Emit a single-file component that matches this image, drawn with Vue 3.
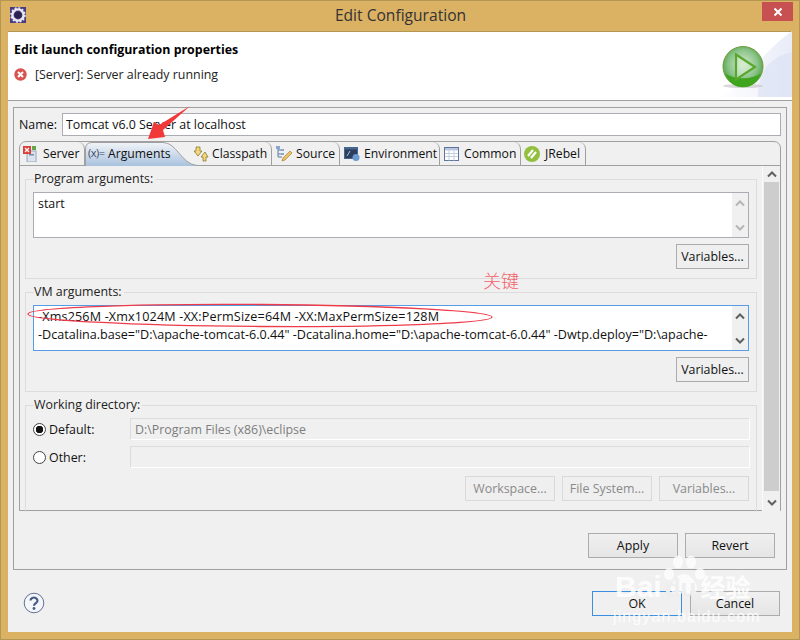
<script setup>
const tabs = [
  { name: 'Server', cls: 'tab-server', icon: 'server' },
  { name: 'Arguments', cls: 'tab-args', icon: 'args' },
  { name: 'Classpath', cls: 'tab-classpath', icon: 'classpath' },
  { name: 'Source', cls: 'tab-source', icon: 'source' },
  { name: 'Environment', cls: 'tab-env', icon: 'env' },
  { name: 'Common', cls: 'tab-common', icon: 'common' },
  { name: 'JRebel', cls: 'tab-jrebel', icon: 'jrebel' }
]
</script>

<template>
  <div class="window">
    <div class="titlebar">
      <svg class="app-icon" width="16" height="16" viewBox="0 0 16 16">
        <rect width="16" height="16" fill="#4b3b80" />
        <circle cx="8" cy="8" r="5.6" fill="none" stroke="#e8e8ee" stroke-width="2.4" />
        <circle cx="8" cy="8" r="7" fill="none" stroke="#e8e8ee" stroke-width="1.6" stroke-dasharray="2 1.67" />
        <circle cx="8" cy="8" r="3.6" fill="#2a2350" />
      </svg>
      <span class="title">Edit Configuration</span>
      <div class="close">
        <svg width="10" height="10" viewBox="0 0 10 10"><path d="M1.5 1.5l7 7M8.5 1.5l-7 7" stroke="#fff" stroke-width="2" /></svg>
      </div>
    </div>

    <div class="body">
      <div class="banner">
        <div class="banner-text">
          <h1>Edit launch configuration properties</h1>
          <div class="message">
            <svg width="13" height="13" viewBox="0 0 13 13">
              <circle cx="6.5" cy="6.5" r="6.2" fill="#d9534f" />
              <path d="M4 4l5 5M9 4l-5 5" stroke="#fff" stroke-width="2" />
            </svg>
            <span>[Server]: Server already running</span>
          </div>
        </div>
        <svg class="banner-art" width="72" height="66" viewBox="0 0 72 66">
          <defs>
            <linearGradient id="artBg" x1="0" y1="0" x2="1" y2="0">
              <stop offset="0" stop-color="#fff" />
              <stop offset="1" stop-color="#e8ecf8" />
            </linearGradient>
            <radialGradient id="ball" cx="0.5" cy="0.45" r="0.6">
              <stop offset="0" stop-color="#d6ead2" />
              <stop offset="0.6" stop-color="#8cc48a" />
              <stop offset="1" stop-color="#3f9a2e" />
            </radialGradient>
          </defs>
          <path d="M0 66C20 60 40 22 72 0V66Z" fill="url(#artBg)" />
          <path d="M38 66C38 40 50 26 72 21V66Z" fill="#dfe4f5" opacity=".8" />
          <ellipse cx="23" cy="55" rx="20" ry="2" fill="#c8c8c8" opacity=".7" />
          <circle cx="23" cy="35.5" r="20" fill="url(#ball)" stroke="#6f9a3c" stroke-width="1" />
          <path d="M5.500 42.500a18 18 0 0 0 35 0a22 12 0 0 1-35 0Z" fill="#3fa51f" />
          <path d="M16 23.500l19 12.500l-19 12.500Z" fill="#dcefd5" fill-opacity=".5" stroke="#58a82d" stroke-width="2.2" />
        </svg>
      </div>

      <div class="form-box">
        <div class="name-row">
          <label>Name:</label>
          <div class="field">Tomcat v6.0 Server at localhost</div>
        </div>

        <div class="folder">
          <div class="tabstrip">
            <div v-for="tab in tabs" :key="tab.name" class="tab" :class="tab.cls">
              <svg v-if="tab.icon === 'args'" class="args-bg" width="113" height="24" viewBox="0 0 113 24">
                <defs>
                  <linearGradient id="argsGrad" x1="0" y1="0" x2="0" y2="1">
                    <stop offset="0" stop-color="#f1f4f8" />
                    <stop offset="1" stop-color="#a9c2de" />
                  </linearGradient>
                </defs>
                <path d="M0 24V7Q0 .5 7 .5H78C92 .5 96 22 112 23.5V24Z" fill="url(#argsGrad)" />
                <path d="M.5 24V7Q.5 .5 7 .5H78C92 .5 96 22 112 23.5" fill="none" stroke="#a0a0a0" />
              </svg>

              <svg v-if="tab.icon === 'server'" width="14" height="16" viewBox="0 0 14 16">
                <rect x="4" y="5" width="9" height="11" fill="#dde3ee" stroke="#9aa6b8" />
                <rect x="6" y="8" width="5" height="1.5" fill="#7d8ba0" />
                <rect x="0" y="0" width="8" height="8" fill="#d8403c" />
                <path d="M2 2l4 4M6 2l-4 4" stroke="#fff" stroke-width="1.2" />
                <rect x="9" y="0" width="4" height="4" fill="#62a84a" />
              </svg>
              <span v-if="tab.icon === 'args'" class="args-icon">(x)=</span>
              <svg v-if="tab.icon === 'classpath'" width="16" height="16" viewBox="0 0 16 16">
                <path d="M3 1h4v4h2l-4 5l-4-5h2Z" fill="#f3d77a" stroke="#8a7a30" stroke-width=".8" />
                <path d="M11 15v-4H9l4-5l3 5h-2v4Z" transform="translate(-1 0)" fill="#f3d77a" stroke="#8a7a30" stroke-width=".8" />
              </svg>
              <svg v-if="tab.icon === 'source'" width="16" height="16" viewBox="0 0 16 16">
                <path d="M2 1v10M2 4h4M2 8h4M2 11h4" stroke="#5b7aa8" fill="none" />
                <rect x="0" y="0" width="4" height="3" fill="#8aa6cc" />
                <rect x="5" y="3" width="3" height="2" fill="#8aa6cc" />
                <rect x="5" y="7" width="3" height="2" fill="#8aa6cc" />
                <path d="M6 15l1-3l7-7l2 2l-7 7Z" fill="#eac26c" stroke="#b08b3c" stroke-width=".8" />
              </svg>
              <svg v-if="tab.icon === 'env'" width="16" height="16" viewBox="0 0 16 16">
                <rect x="0" y="1" width="14" height="12" fill="#46658f" />
                <rect x="1" y="3.500" width="12" height="8.500" fill="#2d3f5c" />
                <path d="M3 10l3-5" stroke="#a8c0dc" />
                <circle cx="12" cy="11.500" r="3.500" fill="#6b9ad0" />
              </svg>
              <svg v-if="tab.icon === 'common'" width="15" height="14" viewBox="0 0 15 14">
                <rect x=".5" y=".5" width="14" height="13" fill="#fff" stroke="#5f749c" />
                <rect x="1" y="1" width="13" height="2.500" fill="#b9c6de" />
                <path d="M1 6.500h13M1 9.500h13M5 3.500v10M10 3.500v10" stroke="#c3cee0" />
              </svg>
              <svg v-if="tab.icon === 'jrebel'" width="16" height="16" viewBox="0 0 16 16">
                <circle cx="8" cy="8" r="8" fill="#93bf3e" />
                <path d="M4 10l5-6M7 12l5-6" stroke="#fff" stroke-width="2.200" />
              </svg>
              <span class="tab-label">{{ tab.name }}</span>
            </div>
          </div>

          <div class="folder-body">
            <div class="pane">
              <div class="group group-fixed">
                <div class="legend">Program arguments:</div>
                <div class="textarea">
                  <div class="textarea-text">start</div>
                  <div class="mini-scroll off">
                    <svg width="10" height="7" viewBox="0 0 10 7"><path d="M1 5.500l4-4l4 4" fill="none" stroke="currentColor" stroke-width="2" /></svg>
                    <svg width="10" height="7" viewBox="0 0 10 7"><path d="M1 1.500l4 4l4-4" fill="none" stroke="currentColor" stroke-width="2" /></svg>
                  </div>
                </div>
                <div class="btn-row"><button class="btn btn-var">Variables...</button></div>
              </div>

              <div class="group group-fixed">
                <div class="legend">VM arguments:</div>
                <div class="textarea focused">
                  <div class="textarea-text nowrap"><span class="vm-first">-Xms256M -Xmx1024M -XX:PermSize=64M -XX:MaxPermSize=128M</span><br />-Dcatalina.base="D:\apache-tomcat-6.0.44" -Dcatalina.home="D:\apache-tomcat-6.0.44" -Dwtp.deploy="D:\apache-</div>
                  <div class="mini-scroll">
                    <svg width="10" height="7" viewBox="0 0 10 7"><path d="M1 5.500l4-4l4 4" fill="none" stroke="currentColor" stroke-width="2" /></svg>
                    <svg width="10" height="7" viewBox="0 0 10 7"><path d="M1 1.500l4 4l4-4" fill="none" stroke="currentColor" stroke-width="2" /></svg>
                  </div>
                </div>
                <div class="btn-row"><button class="btn btn-var">Variables...</button></div>
              </div>

              <div class="group group-open">
                <div class="legend">Working directory:</div>
                <div class="radio-row">
                  <span class="radio on"></span>
                  <label>Default:</label>
                  <div class="dir-field">D:\Program Files (x86)\eclipse</div>
                </div>
                <div class="radio-row">
                  <span class="radio"></span>
                  <label>Other:</label>
                  <div class="dir-field"></div>
                </div>
                <div class="btn-row dir-buttons">
                  <button class="btn disabled">Workspace...</button>
                  <button class="btn disabled">File System...</button>
                  <button class="btn disabled">Variables...</button>
                </div>
              </div>
            </div>

            <div class="scrollbar">
              <svg width="10" height="7" viewBox="0 0 10 7"><path d="M1 5.500l4-4l4 4" fill="none" stroke="#606060" stroke-width="2" /></svg>
              <div class="thumb"></div>
              <svg width="10" height="7" viewBox="0 0 10 7"><path d="M1 1.500l4 4l4-4" fill="none" stroke="#606060" stroke-width="2" /></svg>
            </div>
          </div>
        </div>

        <div class="apply-row">
          <button class="btn wide">Apply</button>
          <button class="btn wide">Revert</button>
        </div>
      </div>

      <div class="footer">
        <svg class="help" width="22" height="22" viewBox="0 0 22 22">
          <circle cx="11" cy="11" r="9.800" fill="#f4f6fa" stroke="#5f7198" stroke-width="1" />
          <path d="M7.500 8.500a3.500 3 0 1 1 5.500 2.500c-1.300 1-2 1.300-2 2.800" fill="none" stroke="#465a86" stroke-width="2.200" />
          <circle cx="11" cy="16.500" r="1.400" fill="#465a86" />
        </svg>
        <div class="footer-buttons">
          <button class="btn wide default">OK</button>
          <button class="btn wide">Cancel</button>
        </div>
      </div>
    </div>

    <!-- annotations drawn over the screenshot -->
    <svg class="arrow" width="46" height="36" viewBox="0 0 46 36">
      <path d="M43 1L16 25L18 32L1 34L7 17L12 20Z" fill="#f2393a" />
    </svg>
    <svg class="oval" width="470" height="28" viewBox="0 0 470 28">
      <ellipse cx="235" cy="13.500" rx="232" ry="11" transform="rotate(.4 235 13.500)" fill="none" stroke="#ee3b4a" stroke-width="1.300" />
    </svg>
    <div class="note">关键</div>

    <div class="watermark">
      <svg class="paw" width="44" height="44" viewBox="0 0 44 44">
        <ellipse cx="7" cy="19" rx="5" ry="6" />
        <ellipse cx="16" cy="7" rx="5" ry="6.500" />
        <ellipse cx="29" cy="7" rx="5" ry="6.500" />
        <ellipse cx="38" cy="19" rx="5" ry="6" />
        <path d="M22 19c6 0 9 6 12 10c3 5 0 11-6 10c-4-1-8-1-12 0c-6 1-9-5-6-10c3-4 6-10 12-10Z" />
      </svg>
      <div class="wm-brand"><span class="wm-bai">Bai</span><span class="wm-du">du</span><span class="wm-cn">经验</span></div>
      <div class="wm-url">jingyan.baidu.com</div>
    </div>
  </div>
</template>

<style scoped>
.window {
  position: relative;
  box-sizing: border-box;
  width: 800px;
  height: 640px;
  overflow: hidden;
  background: #dbb163;
  border: 1px solid #b39753;
  font-family: "Open Sans", "Noto Sans", sans-serif;
  font-size: 12.4px;
  color: #111;
}

.titlebar {
  position: relative;
  height: 30px;
  display: flex;
  align-items: center;
  justify-content: center;
}

.app-icon {
  position: absolute;
  left: 9px;
  top: 6px;
}

.title {
  font-size: 15.6px;
  color: #333;
  margin-left: 1px;
  margin-bottom: 3px;
}

.close {
  position: absolute;
  right: 6px;
  top: 1px;
  width: 31px;
  height: 19px;
  background: #c75050;
  display: flex;
  align-items: center;
  justify-content: center;
}

.body {
  margin: 0 7px;
  height: 601px;
  background: #f0f0f0;
  border-top: 1px solid #b39753;
  box-sizing: border-box;
}

.banner {
  height: 68px;
  background: #fff;
  border-bottom: 1px solid #a0a0a0;
  display: flex;
  justify-content: space-between;
  align-items: flex-start;
}

.banner-text {
  padding: 9px 0 0 6px;
}

.banner-text h1 {
  margin: 0;
  font-size: 12.4px;
  font-weight: 700;
  line-height: 17px;
  color: #000;
}

.message {
  display: flex;
  align-items: center;
  gap: 8px;
  margin-top: 8px;
  line-height: 17px;
  color: #222;
}

.banner-art {
  display: block;
  margin-top: -1px;
}

.form-box {
  margin: 6px 5px 0;
  height: 463px;
  box-sizing: border-box;
  border: 1px solid #a0a0a0;
  padding: 5px;
}

.name-row {
  display: flex;
  align-items: center;
  height: 23px;
}

.name-row label {
  width: 43px;
}

.field {
  flex: 1;
  height: 23px;
  box-sizing: border-box;
  background: #fff;
  border: 1px solid #abadb3;
  padding: 0 3px;
  line-height: 21px;
}

.folder {
  margin-top: 5px;
  height: 370px;
  box-sizing: border-box;
  border: 1px solid #a0a0a0;
  border-radius: 7px 7px 0 0;
}

.tabstrip {
  display: flex;
  height: 23px;
  border-bottom: 1px solid #a0a0a0;
  box-sizing: content-box;
  font-size: 12.2px;
}

.tab {
  position: relative;
  display: flex;
  align-items: center;
  box-sizing: border-box;
  height: 23px;
  padding-left: 3px;
  border-right: 1px solid #a0a0a0;
  border-top-right-radius: 7px;
}

.tab-label {
  position: relative;
}

.tab-server { width: 65px; gap: 6px; }
.tab-args { width: 105px; gap: 2px; border-right: 0; border-radius: 0; }
.tab-classpath { width: 82px; gap: 3px; }
.tab-source { width: 68px; gap: 4px; padding-left: 4px; }
.tab-env { width: 100px; gap: 4px; padding-left: 4px; }
.tab-common { width: 81px; gap: 5px; padding-left: 4px; }
.tab-jrebel { width: 65px; gap: 5px; padding-left: 3px; }

.args-bg {
  position: absolute;
  left: 0;
  top: 0;
}

.args-icon {
  position: relative;
  top: -1px;
  color: #3c4a66;
  font-size: 11px;
  letter-spacing: -0.5px;
  width: 18px;
}

.folder-body {
  display: flex;
  height: 345px;
}

.pane {
  flex: 1;
  padding: 13px 5px 0;
  min-width: 0;
}

.group {
  border: 1px solid #dcdcdc;
  box-sizing: border-box;
  padding: 0 7px;
}

.group-fixed {
  height: 100px;
  margin-bottom: 13px;
}

.group-open {
  height: 107px;
  border-bottom: 0;
}

.legend {
  display: table;
  margin: -9px 0 0 1px;
  padding: 0 2px 0 0;
  height: 16px;
  line-height: 15px;
  background: #f0f0f0;
  color: #222;
}

.textarea {
  display: flex;
  height: 46px;
  margin-top: 5px;
  box-sizing: border-box;
  background: #fff;
  border: 1px solid #abadb3;
}

.textarea.focused {
  border-color: #569de5;
}

.textarea-text {
  flex: 1;
  min-width: 0;
  padding: 2px 4px;
  line-height: 18px;
  color: #111;
}

.nowrap {
  white-space: nowrap;
  overflow: hidden;
  font-size: 12.6px;
}

.vm-first {
  letter-spacing: 0.16px;
}

.mini-scroll {
  width: 16px;
  background: #f0f0f0;
  display: flex;
  flex-direction: column;
  align-items: center;
  justify-content: space-between;
  padding: 7px 0 6px;
  color: #606060;
}

.mini-scroll.off {
  color: #b5b5b5;
}

.btn-row {
  display: flex;
  justify-content: flex-end;
  gap: 7px;
  margin-top: 6px;
}

.btn {
  box-sizing: border-box;
  height: 25px;
  padding: 0;
  font: inherit;
  color: #111;
  background: linear-gradient(#f0f0f0, #e5e5e5);
  border: 1px solid #acacac;
}

.btn-var {
  width: 73px;
  background: #efefef;
}

.btn.disabled {
  width: 90px;
  background: #efefef;
  border-color: #d9d9d9;
  color: #8a8a8a;
}

.radio-row {
  display: flex;
  align-items: center;
  height: 22px;
  margin-bottom: 6px;
}

.legend + .radio-row {
  margin-top: 5px;
}

.radio-row label {
  width: 81px;
}

.radio {
  box-sizing: border-box;
  width: 13px;
  height: 13px;
  margin-right: 3px;
  border-radius: 50%;
  border: 1px solid #444;
  background: #fff;
}

.radio.on {
  background: radial-gradient(circle, #111 3.500px, #fff 4px);
}

.dir-field {
  flex: 1;
  height: 22px;
  margin-right: -1px;
  box-sizing: border-box;
  border: 1px solid #dcdcdc;
  border-bottom-color: #fff;
  border-right-color: #fff;
  padding: 0 4px;
  line-height: 21px;
  color: #7d7d7d;
}

.dir-buttons {
  margin-top: 8px;
}

.scrollbar {
  width: 17px;
  margin-left: 0;
  display: flex;
  flex-direction: column;
  align-items: center;
  padding-top: 5px;
  background: #f0f0f0;
  border-left: 1px solid #fafafa;
}

.thumb {
  width: 15px;
  height: 309px;
  margin: 4px 0 8px;
  background: #cdcdcd;
}

.apply-row {
  display: flex;
  justify-content: flex-end;
  gap: 7px;
  margin-top: 22px;
  padding-right: 6px;
}

.wide {
  width: 90px;
}

.footer {
  display: flex;
  justify-content: space-between;
  align-items: center;
  padding: 21px 12px 0 15px;
}

.help {
  margin-bottom: 2px;
}

.footer-buttons {
  display: flex;
  gap: 8px;
}

.default {
  border-color: #3c8fe0;
  background: #f0f0f0;
}

.arrow {
  position: absolute;
  left: 146px;
  top: 104px;
}

.oval {
  position: absolute;
  left: 24px;
  top: 301px;
}

.note {
  position: absolute;
  left: 482px;
  top: 266px;
  font-family: "Noto Sans CJK SC", sans-serif;
  font-weight: 300;
  font-size: 18px;
  line-height: 26px;
  color: #f5606a;
}

.watermark {
  position: absolute;
  left: 610px;
  top: 552px;
  width: 150px;
  height: 76px;
  color: rgba(255, 255, 255, 0.85);
}

.paw {
  position: absolute;
  left: 51px;
  top: 2px;
  fill: rgba(255, 255, 255, 0.75);
}

.wm-brand {
  position: absolute;
  left: 4px;
  top: 13px;
  display: flex;
  align-items: baseline;
  font-family: "Liberation Sans", sans-serif;
  font-weight: 700;
  font-size: 30px;
  line-height: 40px;
}

.wm-du {
  margin-left: 3px;
  color: #eee;
  font-size: 26px;
}

.wm-cn {
  margin-left: 4px;
  font-family: "Noto Sans CJK SC", sans-serif;
  font-size: 25px;
}

.wm-url {
  position: absolute;
  left: 2px;
  top: 54px;
  font-family: "Liberation Sans", sans-serif;
  font-size: 16px;
  line-height: 20px;
  letter-spacing: 1.1px;
}
</style>

<style>
html, body {
  margin: 0;
  background: #dbb163;
}
</style>
